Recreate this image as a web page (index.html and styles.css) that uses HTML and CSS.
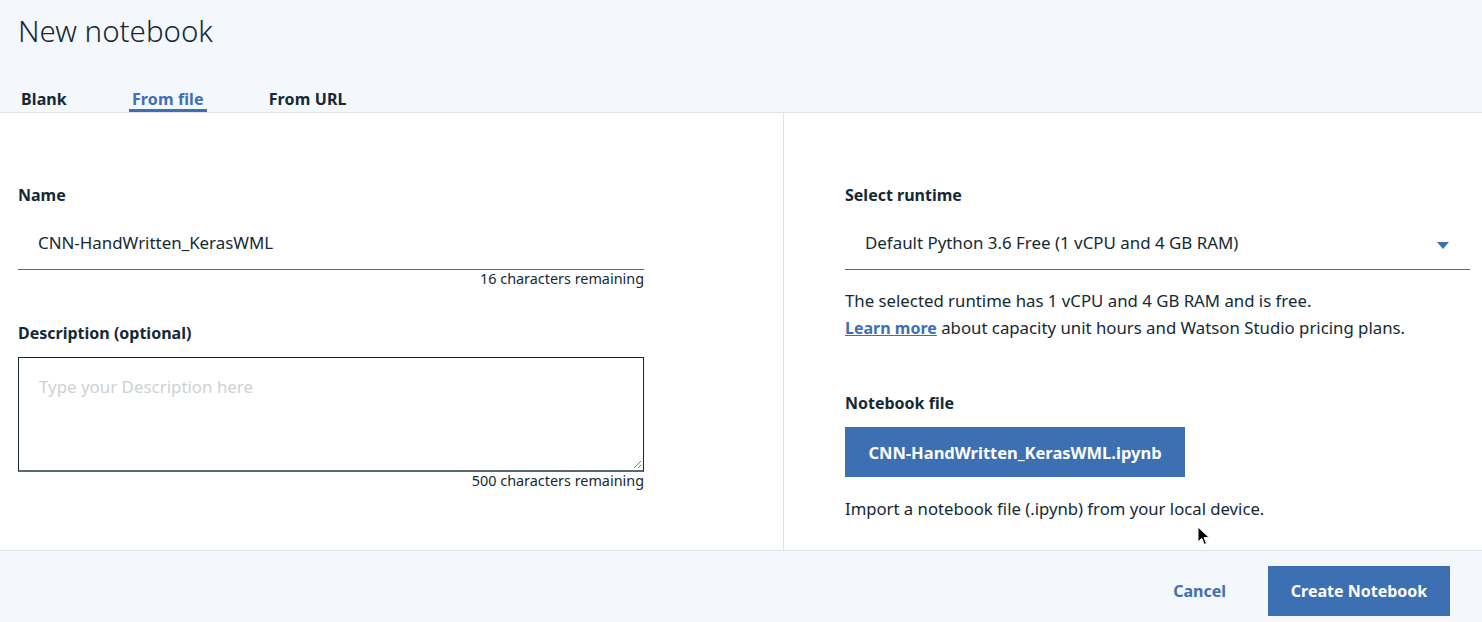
FILE: index.html
```html
<!DOCTYPE html>
<html lang="en">
<head>
<meta charset="utf-8">
<title>New notebook</title>
<link rel="stylesheet" href="styles.css">
</head>
<body>
<div class="page">
  <header class="header">
    <h1 class="title">New notebook</h1>
    <nav class="tabs">
      <span class="tab">Blank</span>
      <span class="tab tab-active">From file</span>
      <span class="tab">From URL</span>
    </nav>
  </header>

  <main class="main">
    <section class="col col-left">
      <label class="label">Name</label>
      <div class="field">CNN-HandWritten_KerasWML</div>
      <div class="helper">16 characters remaining</div>

      <label class="label label-desc">Description (optional)</label>
      <div class="textarea">
        <span class="placeholder">Type your Description here</span>
        <svg class="grip" width="10" height="10" viewBox="0 0 10 10"><path d="M9 2 L2 9 M9 6 L6 9" stroke="#7a7a7a" stroke-width="1"/></svg>
      </div>
      <div class="helper">500 characters remaining</div>
    </section>

    <section class="col col-right">
      <label class="label">Select runtime</label>
      <div class="field select">
        <span>Default Python 3.6 Free (1 vCPU and 4 GB RAM)</span>
        <svg class="caret" width="12" height="7" viewBox="0 0 12 7"><path d="M0 0 H12 L6 7 Z" fill="#3d70b2"/></svg>
      </div>
      <p class="info">The selected runtime has 1 vCPU and 4 GB RAM and is free.<br><a class="link" href="#">Learn more</a> about capacity unit hours and Watson Studio pricing plans.</p>

      <label class="label label-file">Notebook file</label>
      <div class="file-row"><button class="btn btn-file">CNN-HandWritten_KerasWML.ipynb</button></div>
      <p class="import">Import a notebook file (.ipynb) from your local device.</p>
    </section>
  </main>

  <footer class="footer">
    <button class="btn-ghost">Cancel</button>
    <button class="btn btn-create">Create Notebook</button>
  </footer>

  <svg class="cursor" width="15" height="21" viewBox="0 0 15 21"><path d="M1 1 L1 16 L4.7 12.3 L7.3 18.5 L9.5 17.5 L7 11.6 L12.2 11.6 Z" fill="#000" stroke="#fff" stroke-width="1"/></svg>
</div>
</body>
</html>
```
FILE: styles.css
```css
* { box-sizing: border-box; }
html, body { margin: 0; padding: 0; }
body {
  font-family: "Noto Sans", "Liberation Sans", sans-serif;
  color: #152935;
  background: #ffffff;
}
.page {
  position: relative;
  width: 1482px;
  height: 622px;
  display: flex;
  flex-direction: column;
  overflow: hidden;
}
.header {
  background: #f4f7fb;
  height: 113px;
  padding: 14px 18px 0 18px;
  border-bottom: 1px solid #dfe3e6;
  display: flex;
  flex-direction: column;
}
.title {
  margin: 0;
  font-size: 29.5px;
  line-height: 34px;
  font-weight: 300;
  color: #152935;
}
.tabs {
  margin-top: 42px;
  display: flex;
  gap: 59px;
}
.tab {
  padding: 0 3px;
  font-size: 16px;
  font-weight: 700;
  line-height: 19px;
  letter-spacing: 0.12px;
  border-bottom: 3px solid transparent;
  color: #152935;
}
.tab-active {
  color: #3d70b2;
  border-bottom-color: #3d70b2;
}
.main {
  display: flex;
  height: 437px;
  background: #fff;
}
.col {
  display: flex;
  flex-direction: column;
  padding-top: 72px;
}
.col-left {
  width: 784px;
  padding-left: 18px;
  padding-right: 139px;
  border-right: 1px solid #dfe3e6;
}
.col-right {
  flex: 1;
  padding-left: 61px;
  padding-right: 12px;
}
.label {
  font-size: 16px;
  font-weight: 700;
  line-height: 20px;
}
.field {
  margin-top: 11px;
  height: 54px;
  padding-left: 20px;
  border-bottom: 1px solid #5a6872;
  font-size: 16.9px;
  line-height: 53px;
}
.select {
  display: flex;
  align-items: center;
  justify-content: space-between;
  padding-right: 21px;
  line-height: 20px;
}
.caret { margin-top: 6px; }
.helper {
  text-align: right;
  font-size: 14.4px;
  line-height: 18px;
  color: #152935;
}
.label-desc { margin-top: 35px; }
.textarea {
  position: relative;
  margin-top: 14px;
  height: 115px;
  border: 1px solid #152935;
  border-bottom: 2px solid #5a6872;
  padding: 19px 20px;
  font-size: 16.9px;
  line-height: 20px;
}
.placeholder { color: #cdd1d4; }
.grip {
  position: absolute;
  right: 1px;
  bottom: 1px;
}
.info {
  margin: 17px 0 0 0;
  font-size: 16.8px;
  line-height: 27px;
}
.link {
  color: #3d70b2;
  font-size: 16px;
  font-weight: 700;
  text-decoration: underline;
}
.label-file { margin-top: 51px; }
.file-row { margin-top: 14px; display: flex; }
.btn {
  height: 50px;
  border: none;
  background: #3d70b2;
  color: #fff;
  font-family: inherit;
  font-size: 16px;
  font-weight: 700;
}
.btn-file { width: 340px; padding: 0; font-size: 16.5px; }
.import {
  margin: 22px 0 0 0;
  font-size: 16.7px;
  line-height: 20px;
}
.footer {
  flex: 1;
  background: #f4f7fb;
  border-top: 1px solid #dfe3e6;
  display: flex;
  justify-content: flex-end;
  align-items: flex-start;
  padding: 15px 32px 0 0;
  gap: 26px;
}
.btn-ghost {
  height: 50px;
  padding: 0 16px;
  background: transparent;
  border: none;
  color: #3d70b2;
  font-family: inherit;
  font-size: 16px;
  font-weight: 700;
}
.btn-create { width: 182px; padding: 0; }
.cursor {
  position: absolute;
  left: 1197px;
  top: 526px;
}
```
